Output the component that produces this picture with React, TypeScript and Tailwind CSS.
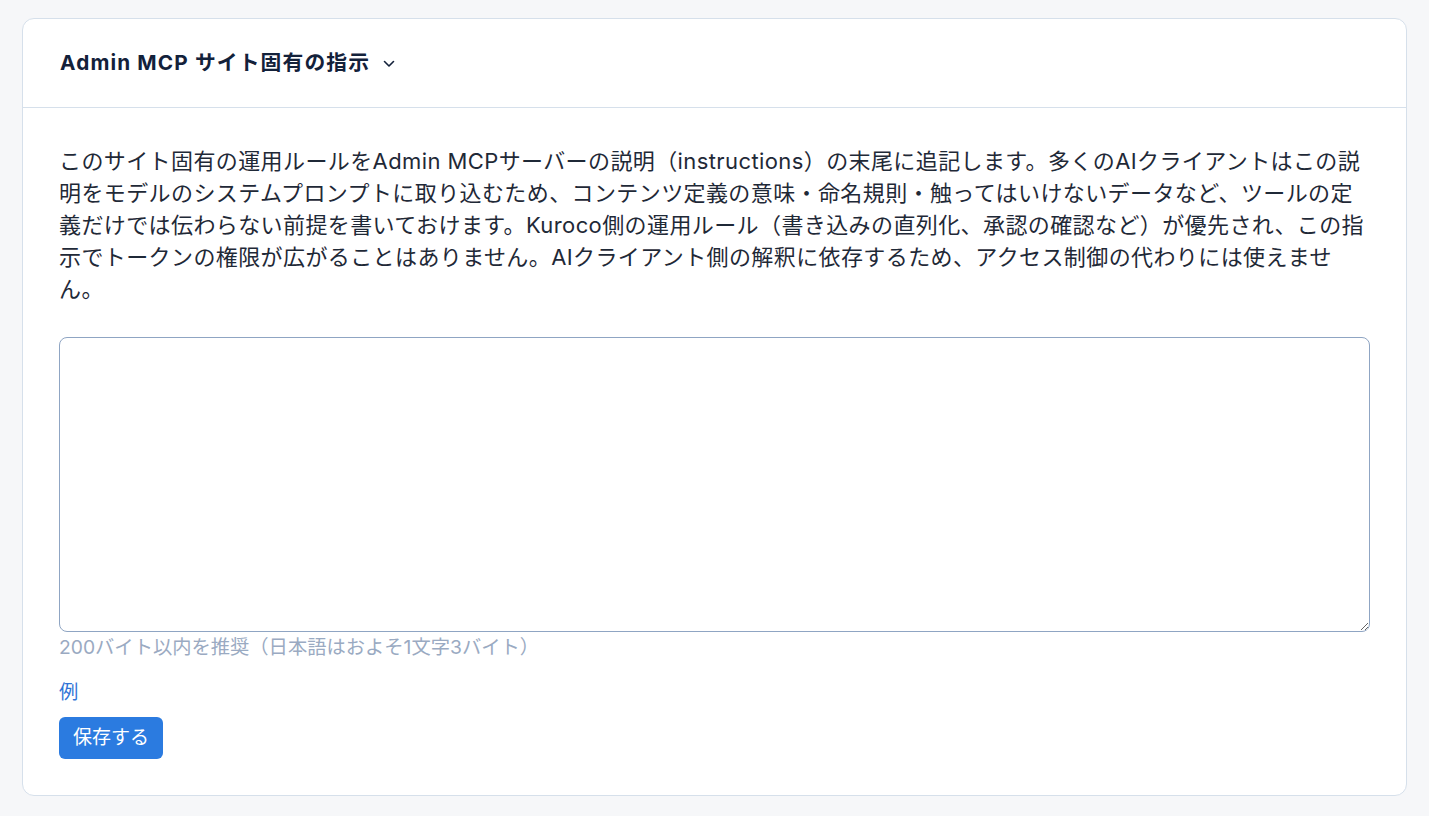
import React from "react";

export default function App() {
  const font = { fontFamily: '"Inter", "Noto Sans CJK JP", sans-serif' };
  return (
    <div className="min-h-[816px] w-full bg-[#f6f7f9] px-[22px] pt-[18px] pb-[20px]" style={font}>
      <div className="rounded-[12px] border border-[#d6e0eb] bg-white">
        <div className="flex h-[89px] items-center border-b border-[#d6e0eb] pl-[37px]">
          <h2 className="text-[20.75px] font-bold tracking-[0.055em] text-[#13213a]">Admin MCP サイト固有の指示</h2>
          <svg className="ml-[13px] mt-[2px]" width="12" height="8" viewBox="0 0 12 8" fill="none">
            <path d="M1.5 1.5L6 6L10.5 1.5" stroke="#13213a" strokeWidth="1.6" strokeLinecap="round" strokeLinejoin="round" />
          </svg>
        </div>
        <div className="px-[36px] pt-[37px] pb-[36px]">
          <p className="text-[22px] leading-[32px] tracking-[0.4px] text-[#1f2937]">
            このサイト固有の運用ルールをAdmin MCPサーバーの説明（instructions）の末尾に追記します。多くのAIクライアントはこの説明をモデルのシステムプロンプトに取り込むため、コンテンツ定義の意味・命名規則・触ってはいけないデータなど、ツールの定義だけでは伝わらない前提を書いておけます。Kuroco側の運用ルール（書き込みの直列化、承認の確認など）が優先され、この指示でトークンの権限が広がることはありません。AIクライアント側の解釈に依存するため、アクセス制御の代わりには使えません。
          </p>
          <textarea className="mt-[32px] block h-[295px] w-full resize-y rounded-[8px] border border-[#8fa5c3] px-3 py-2 text-[18px] outline-none" />
          <p className="mt-[1px] text-[19.3px] leading-[28px] text-[#9aaac2]">200バイト以内を推奨（日本語はおよそ1文字3バイト）</p>
          <p className="mt-[17px] text-[19.3px] leading-[28px] text-[#2f74d6]">例</p>
          <button className="mt-[11px] h-[42px] w-[104px] rounded-[6px] bg-[#2b7be0] text-[19px] text-white">保存する</button>
        </div>
      </div>
    </div>
  );
}
